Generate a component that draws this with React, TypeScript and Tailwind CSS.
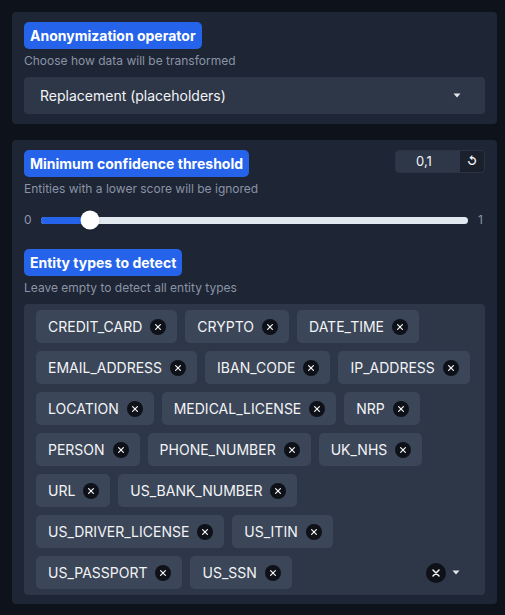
import { useState } from 'react';

const ENTITIES = [
  'CREDIT_CARD',
  'CRYPTO',
  'DATE_TIME',
  'EMAIL_ADDRESS',
  'IBAN_CODE',
  'IP_ADDRESS',
  'LOCATION',
  'MEDICAL_LICENSE',
  'NRP',
  'PERSON',
  'PHONE_NUMBER',
  'UK_NHS',
  'URL',
  'US_BANK_NUMBER',
  'US_DRIVER_LICENSE',
  'US_ITIN',
  'US_PASSPORT',
  'US_SSN',
];

function Caret() {
  return (
    <svg width="8" height="5" viewBox="0 0 8 5" className="shrink-0">
      <path d="M0.5 0.5h7L4 4.5z" fill="#e5e7eb" />
    </svg>
  );
}

function XCircle({ size = 16 }: { size?: number }) {
  return (
    <span
      className="flex shrink-0 items-center justify-center rounded-full bg-[#0e1118]"
      style={{ width: size, height: size }}
    >
      <svg width={size * 0.5} height={size * 0.5} viewBox="0 0 10 10">
        <path d="M2 2l6 6M8 2l-6 6" stroke="#f3f4f6" strokeWidth="1.5" strokeLinecap="round" />
      </svg>
    </span>
  );
}

function Label({ children }: { children: React.ReactNode }) {
  return (
    <div className="inline-flex h-[27px] items-center rounded-[5px] bg-[#2563eb] px-[6px] text-[14px] font-bold text-white">
      {children}
    </div>
  );
}

export default function App() {
  const [selected] = useState(ENTITIES);
  const threshold = 0.1;

  return (
    <div className="min-h-[615px] w-[505px] bg-[#0e121b] pb-2 pl-3 pr-2 pt-3 font-['Inter',sans-serif] text-gray-100">
      {/* Operator */}
      <div className="rounded bg-[#1e2534] px-3 pb-[10px] pt-[10px]">
        <Label>Anonymization operator</Label>
        <div className="mt-[4px] text-[12px] leading-[16px] text-[#8a94a6]">
          Choose how data will be transformed
        </div>
        <div className="mt-[8px] flex h-[37px] items-center justify-between rounded bg-[#2d3748] pl-4 pr-6">
          <span className="text-[14px] text-gray-100">Replacement (placeholders)</span>
          <Caret />
        </div>
      </div>

      {/* Threshold + entities */}
      <div className="mt-4 rounded bg-[#1e2534] px-3 pb-[9px] pt-[10px]">
        <div className="flex items-start justify-between">
          <Label>Minimum confidence threshold</Label>
          <div className="flex h-[23px] w-[90px] overflow-hidden rounded border border-[#2b3443] bg-[#2d3748]">
            <div className="flex flex-1 items-center justify-center pr-2 text-[13px] text-gray-100">0,1</div>
            <div className="flex w-[24px] items-center justify-center bg-[#1a202c] text-[11px] font-bold text-gray-100">
              ↺
            </div>
          </div>
        </div>
        <div className="mt-[4px] text-[12px] leading-[16px] text-[#8a94a6]">
          Entities with a lower score will be ignored
        </div>
        <div className="mt-[14px] flex items-center gap-[10px] text-[12px] text-[#8a94a6]">
          <span className="w-[7px]">0</span>
          <div className="relative h-[7px] flex-1 rounded-full bg-[#e2e8f0]">
            <div
              className="absolute left-0 top-0 h-full rounded-full bg-[#2563eb]"
              style={{ width: `${threshold * 100 + 1}%` }}
            />
            <div
              className="absolute top-1/2 h-[19px] w-[19px] -translate-x-1/2 -translate-y-1/2 rounded-full bg-white shadow"
              style={{ left: `${threshold * 100 + 1.5}%` }}
            />
          </div>
          <span className="w-[7px]">1</span>
        </div>

        <div className="mt-[20px]">
          <Label>Entity types to detect</Label>
        </div>
        <div className="mt-[4px] text-[12px] leading-[16px] text-[#8a94a6]">
          Leave empty to detect all entity types
        </div>
        <div className="relative mt-[8px] rounded bg-[#2d3748] py-[6px] pl-3 pr-[8px]">
          <div className="flex flex-wrap gap-2">
            {selected.map((e) => (
              <div
                key={e}
                className="flex h-[33px] items-center gap-[8px] rounded-[5px] bg-[#3b4658] pl-3 pr-[11px] text-[14px] text-gray-100"
              >
                <span>{e}</span>
                <XCircle />
              </div>
            ))}
          </div>
          <div className="absolute bottom-[6px] right-[25px] flex h-[33px] items-center gap-[6px]">
            <XCircle size={20} />
            <Caret />
          </div>
        </div>
      </div>
    </div>
  );
}
